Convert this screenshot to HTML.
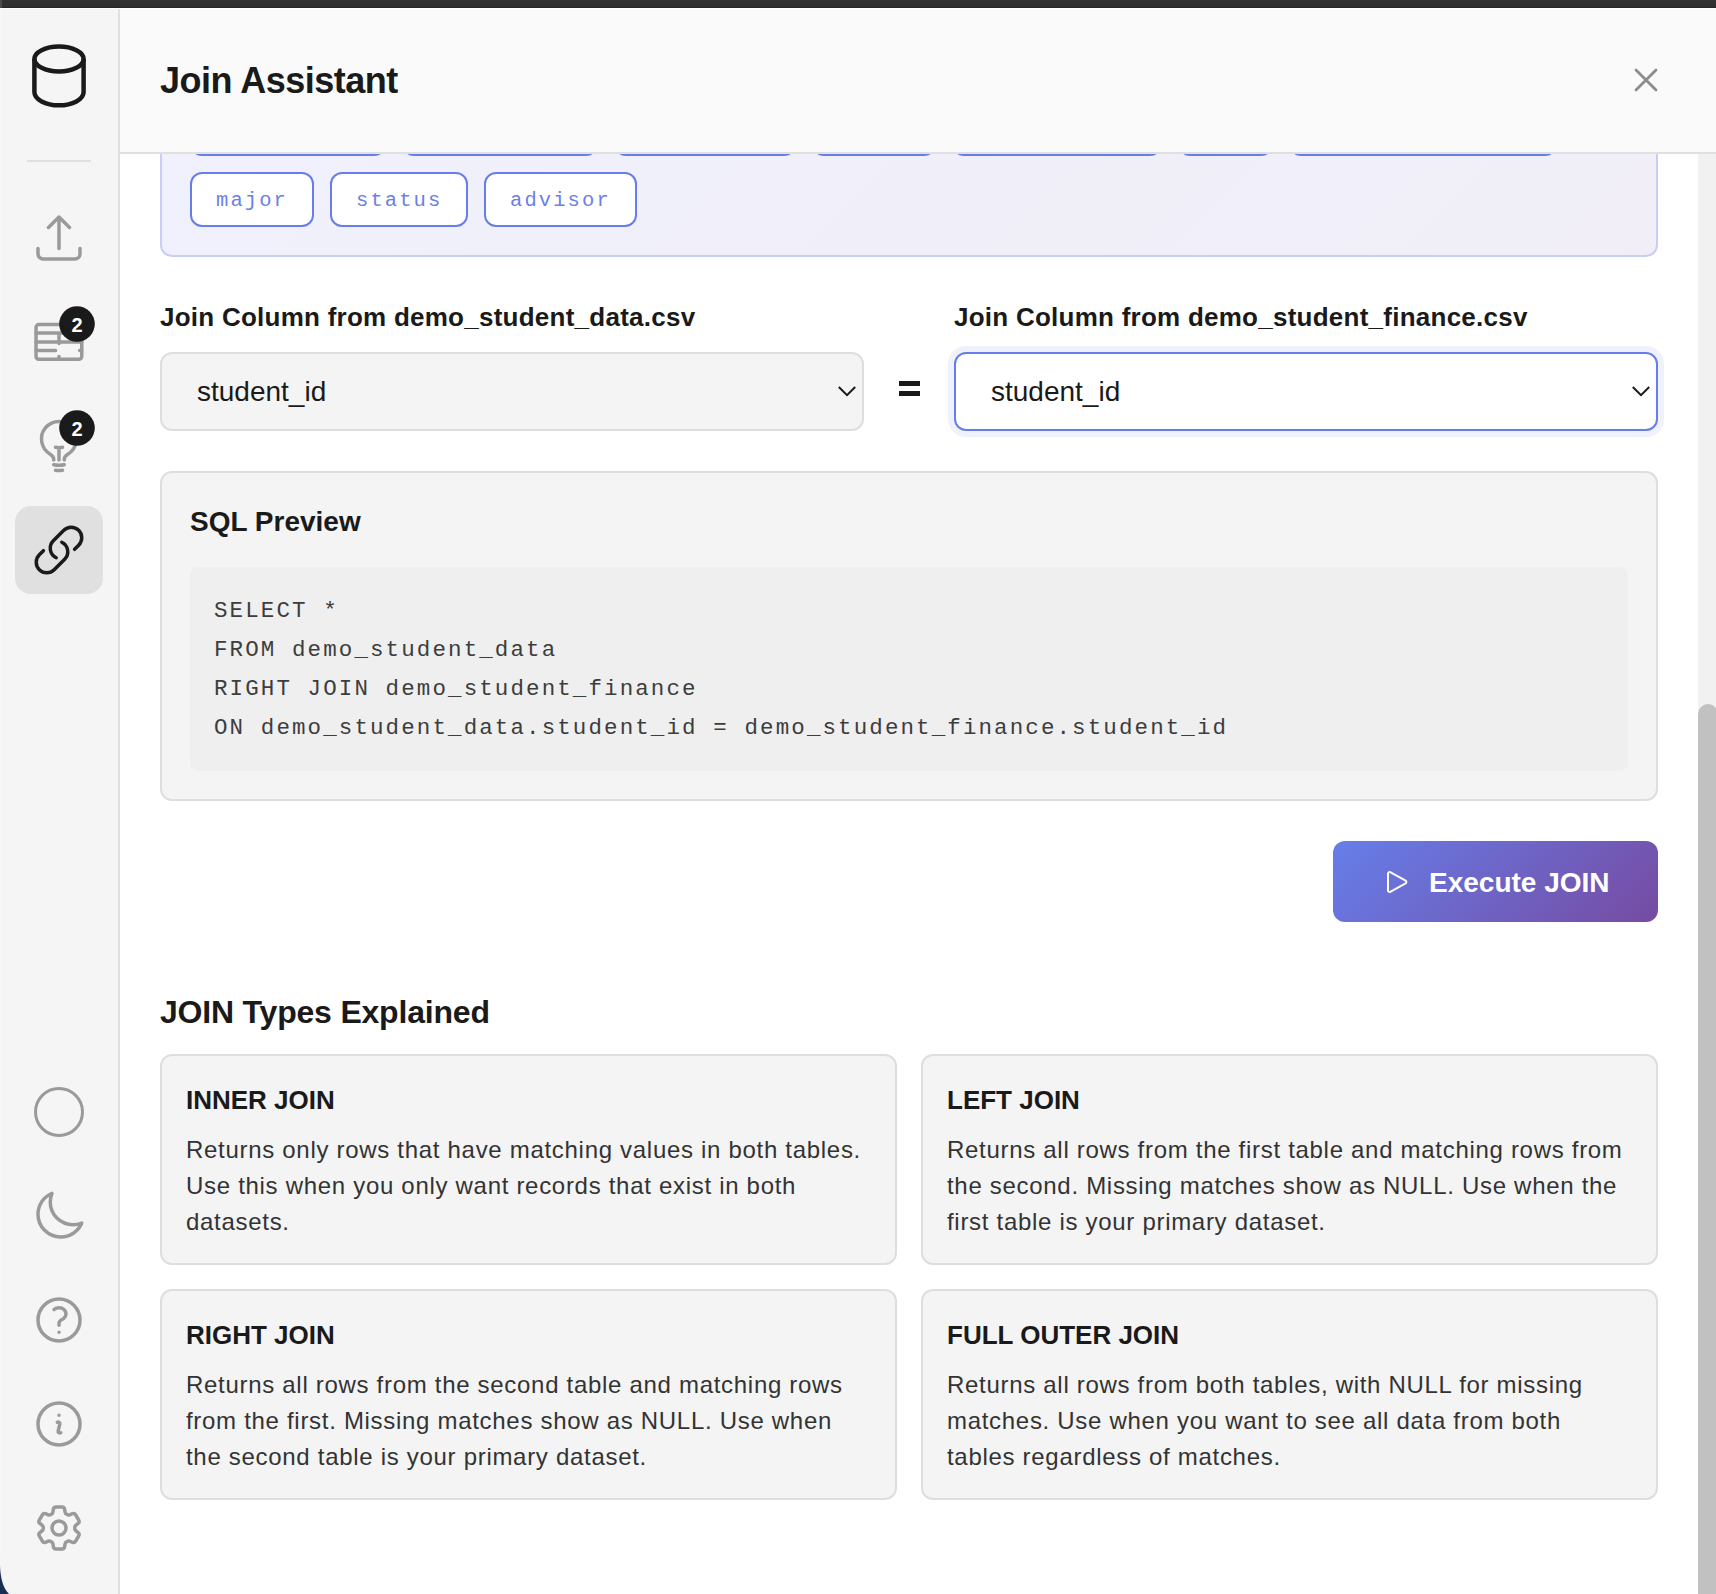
<!DOCTYPE html>
<html><head><meta charset="utf-8">
<style>
*{box-sizing:border-box;margin:0;padding:0}
html,body{width:1716px;height:1594px;overflow:hidden;background:#fff;font-family:"Liberation Sans",sans-serif;color:#1a1a1a}
.a{position:absolute}
.t{position:absolute;white-space:pre}
#topbar{left:0;top:0;width:1716px;height:8px;background:linear-gradient(#313131 0,#313131 6.5px,#262626 7px,#262626 8px)}
#topline{left:0;top:8px;width:1716px;height:1px;background:#fff}
#side{left:0;top:9px;width:118px;height:1585px;background:#f5f5f5}
#sideb{left:118px;top:9px;width:2px;height:1585px;background:#e0e0e0}
#header{left:120px;top:9px;width:1596px;height:143px;background:#fafafa}
#headb{left:120px;top:152px;width:1596px;height:2px;background:#e0e0e0}
#track{left:1698px;top:154px;width:18px;height:1440px;background:#f1f1f1}
#thumb{left:1698px;top:704px;width:20px;height:920px;background:#c1c1c1;border-radius:10px}
.chipbox{left:160px;top:-40px;width:1498px;height:297px;border:2px solid #c9cdf3;border-radius:12px;background:linear-gradient(135deg,#eff1fc,#f1eef7)}
.chip{position:absolute;height:55px;border:2px solid #667eea;border-radius:12px;background:#fff;font-family:"Liberation Mono",monospace;font-size:20.5px;letter-spacing:2.1px;line-height:49px;color:#6b80e9;padding:2px 0 0 24px;white-space:pre;overflow:hidden}
.lbl{font-weight:bold;font-size:26px;line-height:26px;color:#1a1a1a;letter-spacing:0.25px}
.sel{position:absolute;height:79px;border:2px solid #dedede;border-radius:12px;background:#f4f4f4}
.seltxt{font-size:28px;line-height:28px;color:#1a1a1a}
.card{position:absolute;width:737px;height:211px;border:2px solid #dedede;border-radius:12px;background:#f4f4f4}
.ctitle{font-weight:bold;font-size:26px;line-height:26px;color:#1a1a1a}
.ctext{font-size:24px;line-height:36px;color:#333;letter-spacing:0.7px}
.code{font-family:"Liberation Mono",monospace;font-size:22.5px;letter-spacing:2.1px;line-height:39px;color:#3d3d3d}
</style></head><body>
<div id="main" class="a" style="left:0;top:0;width:1716px;height:1594px;overflow:hidden">
  <!-- chips container -->
  <div class="a chipbox"></div>
  <div class="chip" style="left:190px;top:101px;width:196px">student_id</div>
  <div class="chip" style="left:402px;top:101px;width:196px">first_name</div>
  <div class="chip" style="left:614px;top:101px;width:181.6px">last_name</div>
  <div class="chip" style="left:812px;top:101px;width:124px">email</div>
  <div class="chip" style="left:952px;top:101px;width:210.4px">nationality</div>
  <div class="chip" style="left:1178px;top:101px;width:95.2px">gpa</div>
  <div class="chip" style="left:1289px;top:101px;width:268px">enrollment_date</div>
  <div class="chip" style="left:190px;top:172px;width:124px">major</div>
  <div class="chip" style="left:330px;top:172px;width:138.4px">status</div>
  <div class="chip" style="left:484px;top:172px;width:152.8px">advisor</div>

  <!-- labels -->
  <div class="t lbl" style="left:160px;top:304px">Join Column from demo_student_data.csv</div>
  <div class="t lbl" style="left:954px;top:304px">Join Column from demo_student_finance.csv</div>

  <!-- selects -->
  <div class="sel" style="left:160px;top:352px;width:704px"></div>
  <div class="t seltxt" style="left:197px;top:378px">student_id</div>
  <svg class="a" style="left:830px;top:370px" width="40" height="40"><path d="M8.8 17 L17 25.2 L25.2 17" fill="none" stroke="#1a1a1a" stroke-width="2"/></svg>

  <div class="a" style="left:948px;top:346px;width:716px;height:91px;border-radius:18px;background:#eff2fd"></div>
  <div class="sel" style="left:954px;top:352px;width:704px;background:#fff;border-color:#667eea"></div>
  <div class="t seltxt" style="left:991px;top:378px">student_id</div>
  <svg class="a" style="left:1624px;top:370px" width="40" height="40"><path d="M8.8 17 L17 25.2 L25.2 17" fill="none" stroke="#1a1a1a" stroke-width="2"/></svg>

  <!-- equals -->
  <div class="a" style="left:899px;top:381px;width:21px;height:5px;background:#1a1a1a"></div>
  <div class="a" style="left:899px;top:391px;width:21px;height:5px;background:#1a1a1a"></div>

  <!-- SQL preview -->
  <div class="a" style="left:160px;top:471px;width:1498px;height:330px;border:2px solid #dedede;border-radius:12px;background:#f4f4f4"></div>
  <div class="t" style="left:190px;top:508px;font-weight:bold;font-size:28px;line-height:28px">SQL Preview</div>
  <div class="a" style="left:190px;top:567px;width:1438px;height:204px;border-radius:8px;background:#efefef"></div>
  <div class="t code" style="left:214px;top:592px">SELECT *
FROM demo_student_data
RIGHT JOIN demo_student_finance
ON demo_student_data.student_id = demo_student_finance.student_id</div>

  <!-- execute button -->
  <div class="a" style="left:1333px;top:841px;width:325px;height:81px;border-radius:12px;background:linear-gradient(135deg,#667eea 0%,#764ba2 100%)"></div>
  <svg class="a" style="left:1381px;top:866px" width="32" height="32" viewBox="0 0 24 24"><path d="M5.25 5.653c0-.856.917-1.398 1.667-.986l11.54 6.347a1.125 1.125 0 0 1 0 1.972l-11.54 6.347a1.125 1.125 0 0 1-1.667-.986V5.653Z" fill="none" stroke="#fff" stroke-width="1.5" stroke-linejoin="round"/></svg>
  <div class="t" style="left:1429px;top:869px;font-weight:bold;font-size:28px;line-height:28px;color:#fff">Execute JOIN</div>

  <!-- JOIN types -->
  <div class="t" style="left:160px;top:996px;font-weight:bold;font-size:32px;line-height:32px;letter-spacing:-0.2px">JOIN Types Explained</div>

  <div class="card" style="left:160px;top:1054px"></div>
  <div class="t ctitle" style="left:186px;top:1087px">INNER JOIN</div>
  <div class="t ctext" style="left:186px;top:1132px">Returns only rows that have matching values in both tables.
Use this when you only want records that exist in both
datasets.</div>

  <div class="card" style="left:921px;top:1054px"></div>
  <div class="t ctitle" style="left:947px;top:1087px">LEFT JOIN</div>
  <div class="t ctext" style="left:947px;top:1132px">Returns all rows from the first table and matching rows from
the second. Missing matches show as NULL. Use when the
first table is your primary dataset.</div>

  <div class="card" style="left:160px;top:1289px"></div>
  <div class="t ctitle" style="left:186px;top:1322px">RIGHT JOIN</div>
  <div class="t ctext" style="left:186px;top:1367px">Returns all rows from the second table and matching rows
from the first. Missing matches show as NULL. Use when
the second table is your primary dataset.</div>

  <div class="card" style="left:921px;top:1289px"></div>
  <div class="t ctitle" style="left:947px;top:1322px">FULL OUTER JOIN</div>
  <div class="t ctext" style="left:947px;top:1367px">Returns all rows from both tables, with NULL for missing
matches. Use when you want to see all data from both
tables regardless of matches.</div>
</div>

<!-- scrollbar -->
<div id="track" class="a"></div>
<div id="thumb" class="a"></div>

<!-- header -->
<div id="header" class="a"></div>
<div id="headb" class="a"></div>
<div class="t" style="left:160px;top:63px;font-weight:bold;font-size:36px;line-height:36px;letter-spacing:-0.5px">Join Assistant</div>
<svg class="a" style="left:1616px;top:50px" width="60" height="60"><path d="M20 20 L40 40 M40 20 L20 40" fill="none" stroke="#8c8c8c" stroke-width="2.8" stroke-linecap="round"/></svg>

<!-- top bar -->
<div id="topbar" class="a"></div>
<div id="topline" class="a"></div>
<div class="a" style="left:0;top:0;width:2px;height:8px;background:#4a4a4a"></div>

<!-- sidebar -->
<div id="side" class="a"></div>
<div id="sideb" class="a"></div>
<div class="a" style="left:0;top:9px;width:2px;height:1546px;background:#f7f7f7"></div>
<svg class="a" style="left:0;top:0" width="118" height="1594">
  <!-- db logo -->
  <g fill="none" stroke="#1a1a1a" stroke-width="4.5">
    <ellipse cx="59" cy="59" rx="24.6" ry="12.4"/>
    <path d="M34.4 59 V92 A24.6 13.3 0 0 0 83.6 92 V59"/>
  </g>
  <rect x="27" y="160" width="64" height="2" fill="#e0e0e0"/>
  <!-- upload -->
  <g transform="translate(31 210) scale(2.3333)" fill="none" stroke="#9a9a9a" stroke-width="1.5" stroke-linecap="round" stroke-linejoin="round">
    <path d="M3 16.5v2.25A2.25 2.25 0 0 0 5.25 21h13.5A2.25 2.25 0 0 0 21 18.75V16.5m-13.5-9L12 3m0 0 4.5 4.5M12 3v13.5"/>
  </g>
  <!-- table cells -->
  <g fill="none" stroke="#9a9a9a" stroke-width="3.5" stroke-linecap="round" stroke-linejoin="round">
    <rect x="36.05" y="324.55" width="45.7" height="34.7" rx="2.8"/>
    <path d="M36.05 333.1 H81.75 M36.05 341.9 H81.75 M36.05 350.4 H55.6 M59 333.1 V343.6 M59 359.25 V356.6 M81.75 350.4 H79.6"/>
  </g>
  
  <circle cx="77" cy="324" r="17.8" fill="#1a1a1a"/>
  <!-- light bulb -->
  <g transform="translate(31 418) scale(2.3333)" fill="none" stroke="#9a9a9a" stroke-width="1.5" stroke-linecap="round" stroke-linejoin="round">
    <path d="M12 18v-5.25m0 0a6.01 6.01 0 0 0 1.5-.189m-1.5.189a6.01 6.01 0 0 1-1.5-.189m3.75 7.478a12.06 12.06 0 0 1-4.5 0m3.75 2.383a14.406 14.406 0 0 1-3 0M14.25 18v-.192c0-.983.658-1.823 1.508-2.316a7.5 7.5 0 1 0-7.517 0c.85.493 1.509 1.333 1.509 2.316V18"/>
  </g>
  
  <circle cx="77" cy="428" r="17.8" fill="#1a1a1a"/>
  <!-- active link -->
  <rect x="15" y="506" width="88" height="88" rx="16" fill="#e0e0e0"/>
  <g transform="translate(31 522) scale(2.3333)" fill="none" stroke="#1a1a1a" stroke-width="1.5" stroke-linecap="round" stroke-linejoin="round">
    <path d="M13.19 8.688a4.5 4.5 0 0 1 1.242 7.244l-4.5 4.5a4.5 4.5 0 0 1-6.364-6.364l1.757-1.757m13.35-.622 1.757-1.757a4.5 4.5 0 0 0-6.364-6.364l-4.5 4.5a4.5 4.5 0 0 0 1.242 7.244"/>
  </g>
  <!-- circle -->
  <circle cx="59" cy="1112" r="23.5" fill="none" stroke="#9a9a9a" stroke-width="3"/>
  <!-- moon -->
  <g transform="translate(31 1188) scale(2.3333)" fill="none" stroke="#9a9a9a" stroke-width="1.5" stroke-linecap="round" stroke-linejoin="round">
    <path d="M21.752 15.002A9.718 9.718 0 0 1 18 15.75c-5.385 0-9.75-4.365-9.75-9.75 0-1.33.266-2.597.748-3.752A9.753 9.753 0 0 0 3 11.25C3 16.635 7.365 21 12.75 21a9.753 9.753 0 0 0 9.002-5.998Z"/>
  </g>
  <!-- question -->
  <g transform="translate(31 1292) scale(2.3333)" fill="none" stroke="#9a9a9a" stroke-width="1.5" stroke-linecap="round" stroke-linejoin="round">
    <path d="M9.879 7.519c1.171-1.025 3.071-1.025 4.242 0 1.172 1.025 1.172 2.687 0 3.712-.203.179-.43.326-.67.442-.745.361-1.45.999-1.45 1.827v.75M21 12a9 9 0 1 1-18 0 9 9 0 0 1 18 0Zm-9 5.25h.008v.008H12v-.008Z"/>
  </g>
  <!-- info -->
  <g transform="translate(31 1396) scale(2.3333)" fill="none" stroke="#9a9a9a" stroke-width="1.5" stroke-linecap="round" stroke-linejoin="round">
    <path d="m11.25 11.25.041-.02a.75.75 0 0 1 1.063.852l-.708 2.836a.75.75 0 0 0 1.063.853l.041-.021M21 12a9 9 0 1 1-18 0 9 9 0 0 1 18 0Zm-9-3.75h.008v.008H12V8.25Z"/>
  </g>
  <!-- gear -->
  <g transform="translate(31 1500) scale(2.3333)" fill="none" stroke="#9a9a9a" stroke-width="1.5" stroke-linecap="round" stroke-linejoin="round">
    <path d="M9.594 3.94c.09-.542.56-.94 1.11-.94h2.593c.55 0 1.02.398 1.11.94l.213 1.281c.063.374.313.686.645.87.074.04.147.083.22.127.325.196.72.257 1.075.124l1.217-.456a1.125 1.125 0 0 1 1.37.49l1.296 2.247a1.125 1.125 0 0 1-.26 1.431l-1.003.827c-.293.241-.438.613-.43.992a7.723 7.723 0 0 1 0 .255c-.008.378.137.75.43.991l1.004.827c.424.35.534.955.26 1.43l-1.298 2.247a1.125 1.125 0 0 1-1.369.491l-1.217-.456c-.355-.133-.75-.072-1.076.124a6.47 6.47 0 0 1-.22.128c-.331.183-.581.495-.644.869l-.213 1.281c-.09.543-.56.94-1.11.94h-2.594c-.55 0-1.019-.398-1.11-.94l-.213-1.281c-.062-.374-.312-.686-.644-.87a6.52 6.52 0 0 1-.22-.127c-.325-.196-.72-.257-1.076-.124l-1.217.456a1.125 1.125 0 0 1-1.369-.49l-1.297-2.247a1.125 1.125 0 0 1 .26-1.431l1.004-.827c.292-.24.437-.613.43-.991a6.932 6.932 0 0 1 0-.255c.007-.38-.138-.751-.43-.992l-1.004-.827a1.125 1.125 0 0 1-.26-1.43l1.297-2.247a1.125 1.125 0 0 1 1.37-.491l1.216.456c.356.133.751.072 1.076-.124.072-.044.146-.086.22-.128.332-.183.582-.495.644-.869l.214-1.28Z"/>
    <path d="M15 12a3 3 0 1 1-6 0 3 3 0 0 1 6 0Z"/>
  </g>
  <!-- window corner -->
  <path d="M0 1566 C0.5 1578 3 1588 9 1594 L0 1594 Z" fill="#1b2f52"/>
</svg>
<div class="t" style="left:71.5px;top:313.5px;font-weight:bold;font-size:20px;line-height:22px;color:#fff">2</div>
<div class="t" style="left:71.5px;top:417.5px;font-weight:bold;font-size:20px;line-height:22px;color:#fff">2</div>
</body></html>
